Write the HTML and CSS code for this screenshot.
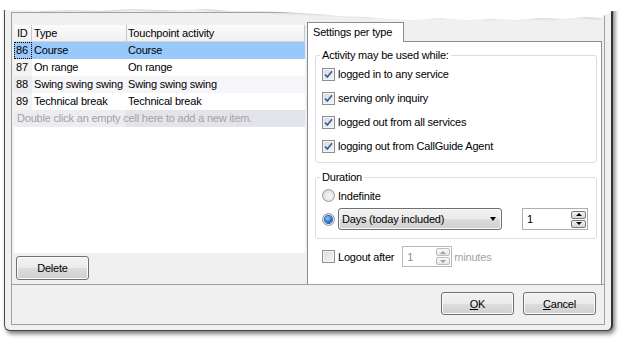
FILE: index.html
```html
<!DOCTYPE html>
<html>
<head>
<meta charset="utf-8">
<link rel="stylesheet" href="styles.css">
</head>
<body>
<div class="dialog">
  <div class="frame">
    <div class="content">
      <div class="left">
        <div class="table">
          <div class="row head"><div class="cell c1">ID</div><div class="cell c2">Type</div><div class="cell c3">Touchpoint activity</div></div>
          <div class="row sel"><div class="cell c1 focus">86</div><div class="cell c2">Course</div><div class="cell c3">Course</div></div>
          <div class="row"><div class="cell c1 idc">87</div><div class="cell c2">On range</div><div class="cell c3">On range</div></div>
          <div class="row alt"><div class="cell c1 idc">88</div><div class="cell c2">Swing swing swing</div><div class="cell c3">Swing swing swing</div></div>
          <div class="row"><div class="cell c1 idc">89</div><div class="cell c2">Technical break</div><div class="cell c3">Technical break</div></div>
          <div class="row newrow"><div class="newtext">Double click an empty cell here to add a new item.</div></div>
        </div>
        <button class="btn delete">Delete</button>
      </div>
      <div class="right">
        <div class="tabs"><div class="tab">Settings per type</div><div class="tabline"></div></div>
        <div class="panel">
          <fieldset class="group g1">
            <legend>Activity may be used while:</legend>
            <div class="opt"><span class="cb"><svg width="11" height="11" viewBox="0 0 11 11"><path d="M2 5.5 L4.3 8 L9 2.3" fill="none" stroke="#3b5aa0" stroke-width="1.7"/></svg></span><span>logged in to any service</span></div>
            <div class="opt"><span class="cb"><svg width="11" height="11" viewBox="0 0 11 11"><path d="M2 5.5 L4.3 8 L9 2.3" fill="none" stroke="#3b5aa0" stroke-width="1.7"/></svg></span><span>serving only inquiry</span></div>
            <div class="opt"><span class="cb"><svg width="11" height="11" viewBox="0 0 11 11"><path d="M2 5.5 L4.3 8 L9 2.3" fill="none" stroke="#3b5aa0" stroke-width="1.7"/></svg></span><span>logged out from all services</span></div>
            <div class="opt"><span class="cb"><svg width="11" height="11" viewBox="0 0 11 11"><path d="M2 5.5 L4.3 8 L9 2.3" fill="none" stroke="#3b5aa0" stroke-width="1.7"/></svg></span><span>logging out from CallGuide Agent</span></div>
          </fieldset>
          <fieldset class="group g2">
            <legend>Duration</legend>
            <div class="opt r1"><span class="rb"></span><span>Indefinite</span></div>
            <div class="opt r2"><span class="rb on"></span>
              <div class="select"><span>Days (today included)</span><span class="arrow"></span></div>
              <div class="spin"><span>1</span><div class="spinbtns"><span class="sb"><i class="up"></i></span><span class="sb"><i class="down"></i></span></div></div>
            </div>
          </fieldset>
          <div class="opt logout"><span class="cb"></span><span>Logout after</span>
            <div class="spin dis"><span>1</span><div class="spinbtns"><span class="sb"><i class="up"></i></span><span class="sb"><i class="down"></i></span></div></div>
            <span class="gray">minutes</span>
          </div>
        </div>
      </div>
    </div>
    <div class="bar">
      <button class="btn"><u>O</u>K</button>
      <button class="btn"><u>C</u>ancel</button>
    </div>
  </div>
</div>
<svg class="tear" width="624" height="26" viewBox="0 0 624 26">
  <defs>
    <filter id="bl" x="-5%" y="-50%" width="110%" height="200%"><feGaussianBlur stdDeviation="1.6"/></filter>
  </defs>
  <path d="M40 10 L70 8 L100 10 L130 7 L160 9 L190 6 L220 9 L250 8 L280 11 L310 12 L340 13 L370 15 L400 14 L430 16 L460 15 L490 17 L520 16 L550 17 L580 15 L600 17" fill="none" stroke="#b8b8b8" stroke-width="3" filter="url(#bl)"/>
  <path d="M0 0 L624 0 L624 11 L612 11 L600 18 L585 17 L565 19 L540 18 L515 20 L490 19 L465 20 L440 18 L415 20 L390 19 L365 17 L340 16 L318 14 L300 13 L280 12 L255 11 L230 11 L205 9 L180 10 L155 10 L130 9 L100 11 L70 10 L45 11 L20 10 L0 10 Z" fill="#ffffff"/>
</svg>
</body>
</html>
```

FILE: styles.css
```css
* { box-sizing: border-box; }
html, body { margin: 0; padding: 0; background: #ffffff; }
body {
  width: 624px;
  height: 344px;
  overflow: hidden;
  position: relative;
  font-family: "Liberation Sans", Arial, sans-serif;
  font-size: 11px;
  letter-spacing: -0.2px;
  color: #000;
}
.dialog {
  margin-left: 4px;
  width: 609px;
  height: 331px;
  background: #f0f0f0;
  border-left: 1px solid #4a4a4a;
  border-right: 2px solid #333;
  border-bottom: 1px solid #444;
  border-radius: 0 0 6px 6px;
  padding: 12px 6px 5px 6px;
  box-shadow: 2px 3px 4px rgba(0,0,0,0.5);
}
.frame {
  width: 594px;
  height: 313px;
  border: 1px solid #a0a0a0;
  display: flex;
  flex-direction: column;
}
.content {
  height: 271px;
  display: flex;
  padding: 9px 0 0 2px;
}
.left {
  width: 291px;
  display: flex;
  flex-direction: column;
}
.table {
  margin-top: 3px;
  height: 228px;
  background: #fff;
}
.row {
  display: grid;
  grid-template-columns: 18px 95px 1fr;
  height: 17px;
  line-height: 17px;
  white-space: nowrap;
}
.cell { overflow: hidden; }
.c1 { padding-left: 2px; }
.c2 { padding-left: 2px; }
.c3 { padding-left: 1px; }
.head { background: linear-gradient(#fbfbfb, #f1f1f1); border-bottom: 1px solid #d5d5d5; height: 17px; line-height: 16px; }
.head .cell { border-right: 1px solid #c8c8c8; }
.head .c1 { padding-left: 3px; }
.sel { background: #99c8fb; }
.focus { outline: 1px dotted #000; outline-offset: -1px; }
.idc { background: #f3f3f3; }
.alt { background: #f5f5fa; }
.alt .idc { background: #ececf0; }
.newrow {
  display: block;
  background: linear-gradient(90deg, #ececf1 0, #ececf1 112px, #e3e3ea 112px);
}
.newtext { padding-left: 3px; color: #a3a3a3; }
.btn {
  font-family: "Liberation Sans", Arial, sans-serif;
  font-size: 11px;
  letter-spacing: -0.2px;
  color: #000;
  width: 73px;
  height: 23px;
  padding: 0;
  border: 1px solid #707070;
  border-radius: 3px;
  background: linear-gradient(#f2f2f2 0%, #ebebeb 50%, #dddddd 51%, #cfcfcf 100%);
  box-shadow: inset 0 0 0 1px #fbfbfb;
}
.delete { margin: 3px 0 0 2px; height: 24px; }
.right {
  width: 295px;
  margin-left: 2px;
  display: flex;
  flex-direction: column;
}
.tabs { display: flex; height: 20px; }
.tab {
  width: 97px;
  height: 20px;
  border: 1px solid #898c95;
  border-bottom: none;
  background: #fff;
  padding-left: 5px;
  line-height: 18px;
}
.tabline { flex: 1; border-bottom: 1px solid #898c95; }
.panel {
  flex: 1;
  background: #fff;
  border-left: 1px solid #898c95;
  border-right: 1px solid #898c95;
  display: flex;
  flex-direction: column;
}
.group {
  margin: 7px 4px 0 7px;
  padding: 0 6px 4px 6px;
  border: 1px solid #d5dfe5;
  border-radius: 3px;
  min-width: 0;
}
.group legend {
  padding: 0 2px;
  margin-left: -2px;
  line-height: 13px;
}
.g2 { margin-top: 8px; padding-bottom: 7px; }
.opt {
  display: flex;
  align-items: center;
  height: 24px;
  white-space: nowrap;
}
.r1 { height: 23px; }
.cb {
  width: 13px;
  height: 13px;
  border: 1px solid #8e8f8f;
  background: linear-gradient(135deg, #d9d9d9, #f6f6f6);
  box-shadow: inset 0 0 0 1px #f4f4f4;
  margin-right: 3px;
  display: flex;
  align-items: center;
  justify-content: center;
  flex: none;
}
.rb {
  width: 13px;
  height: 13px;
  border-radius: 50%;
  border: 1px solid #979797;
  background: radial-gradient(circle at 60% 60%, #f8f8f8, #d4d4d4);
  margin-right: 3px;
  flex: none;
  display: flex;
  align-items: center;
  justify-content: center;
}
.rb.on::after {
  content: "";
  width: 7px;
  height: 7px;
  border-radius: 50%;
  background: radial-gradient(circle at 40% 35%, #8fd0ff, #1a6fd6 60%, #0b3f8a);
  box-shadow: 0 0 0 1px #2f5f9e;
}
.select {
  width: 164px;
  height: 22px;
  border: 1px solid #707070;
  border-radius: 3px;
  background: linear-gradient(#f2f2f2 0%, #ebebeb 50%, #dddddd 51%, #cfcfcf 100%);
  box-shadow: inset 0 0 0 1px #fafafa;
  display: flex;
  align-items: center;
  justify-content: space-between;
  padding: 0 5px 0 3px;
}
.arrow {
  width: 0;
  height: 0;
  border-left: 3.5px solid transparent;
  border-right: 3.5px solid transparent;
  border-top: 4px solid #000;
}
.spin {
  margin-left: 20px;
  width: 66px;
  height: 22px;
  border: 1px solid #abadb3;
  background: #fff;
  display: flex;
  align-items: center;
  justify-content: space-between;
  padding: 0 1px 0 4px;
}
.spinbtns { display: flex; flex-direction: column; gap: 1px; }
.sb {
  width: 15px;
  height: 8px;
  border: 1px solid #7a7a7a;
  border-radius: 2px;
  background: linear-gradient(#f2f2f2, #d6d6d6);
  display: flex;
  align-items: center;
  justify-content: center;
}
.sb i { width: 0; height: 0; border-left: 3px solid transparent; border-right: 3px solid transparent; }
.sb i.up { border-bottom: 3px solid #000; }
.sb i.down { border-top: 3px solid #000; }
.logout { margin: 7px 0 0 14px; height: 21px; }
.spin.dis {
  margin-left: 8px;
  width: 50px;
  height: 21px;
  border-color: #b9b9b9;
  color: #8a8a8a;
}
.spin.dis .sb { width: 14px; border-color: #bcbcbc; background: linear-gradient(#f8f8f8, #e6e6e6); }
.spin.dis .sb i.up { border-bottom-color: #a0a0a0; }
.spin.dis .sb i.down { border-top-color: #a0a0a0; }
.gray { color: #a3a3a3; margin-left: 2px; }
.bar {
  flex: 1;
  border-top: 1px solid #a0a0a0;
  display: flex;
  justify-content: flex-end;
  gap: 9px;
  padding: 7px 8px 0 0;
}
.tear { position: absolute; left: 0; top: 0; }
```
